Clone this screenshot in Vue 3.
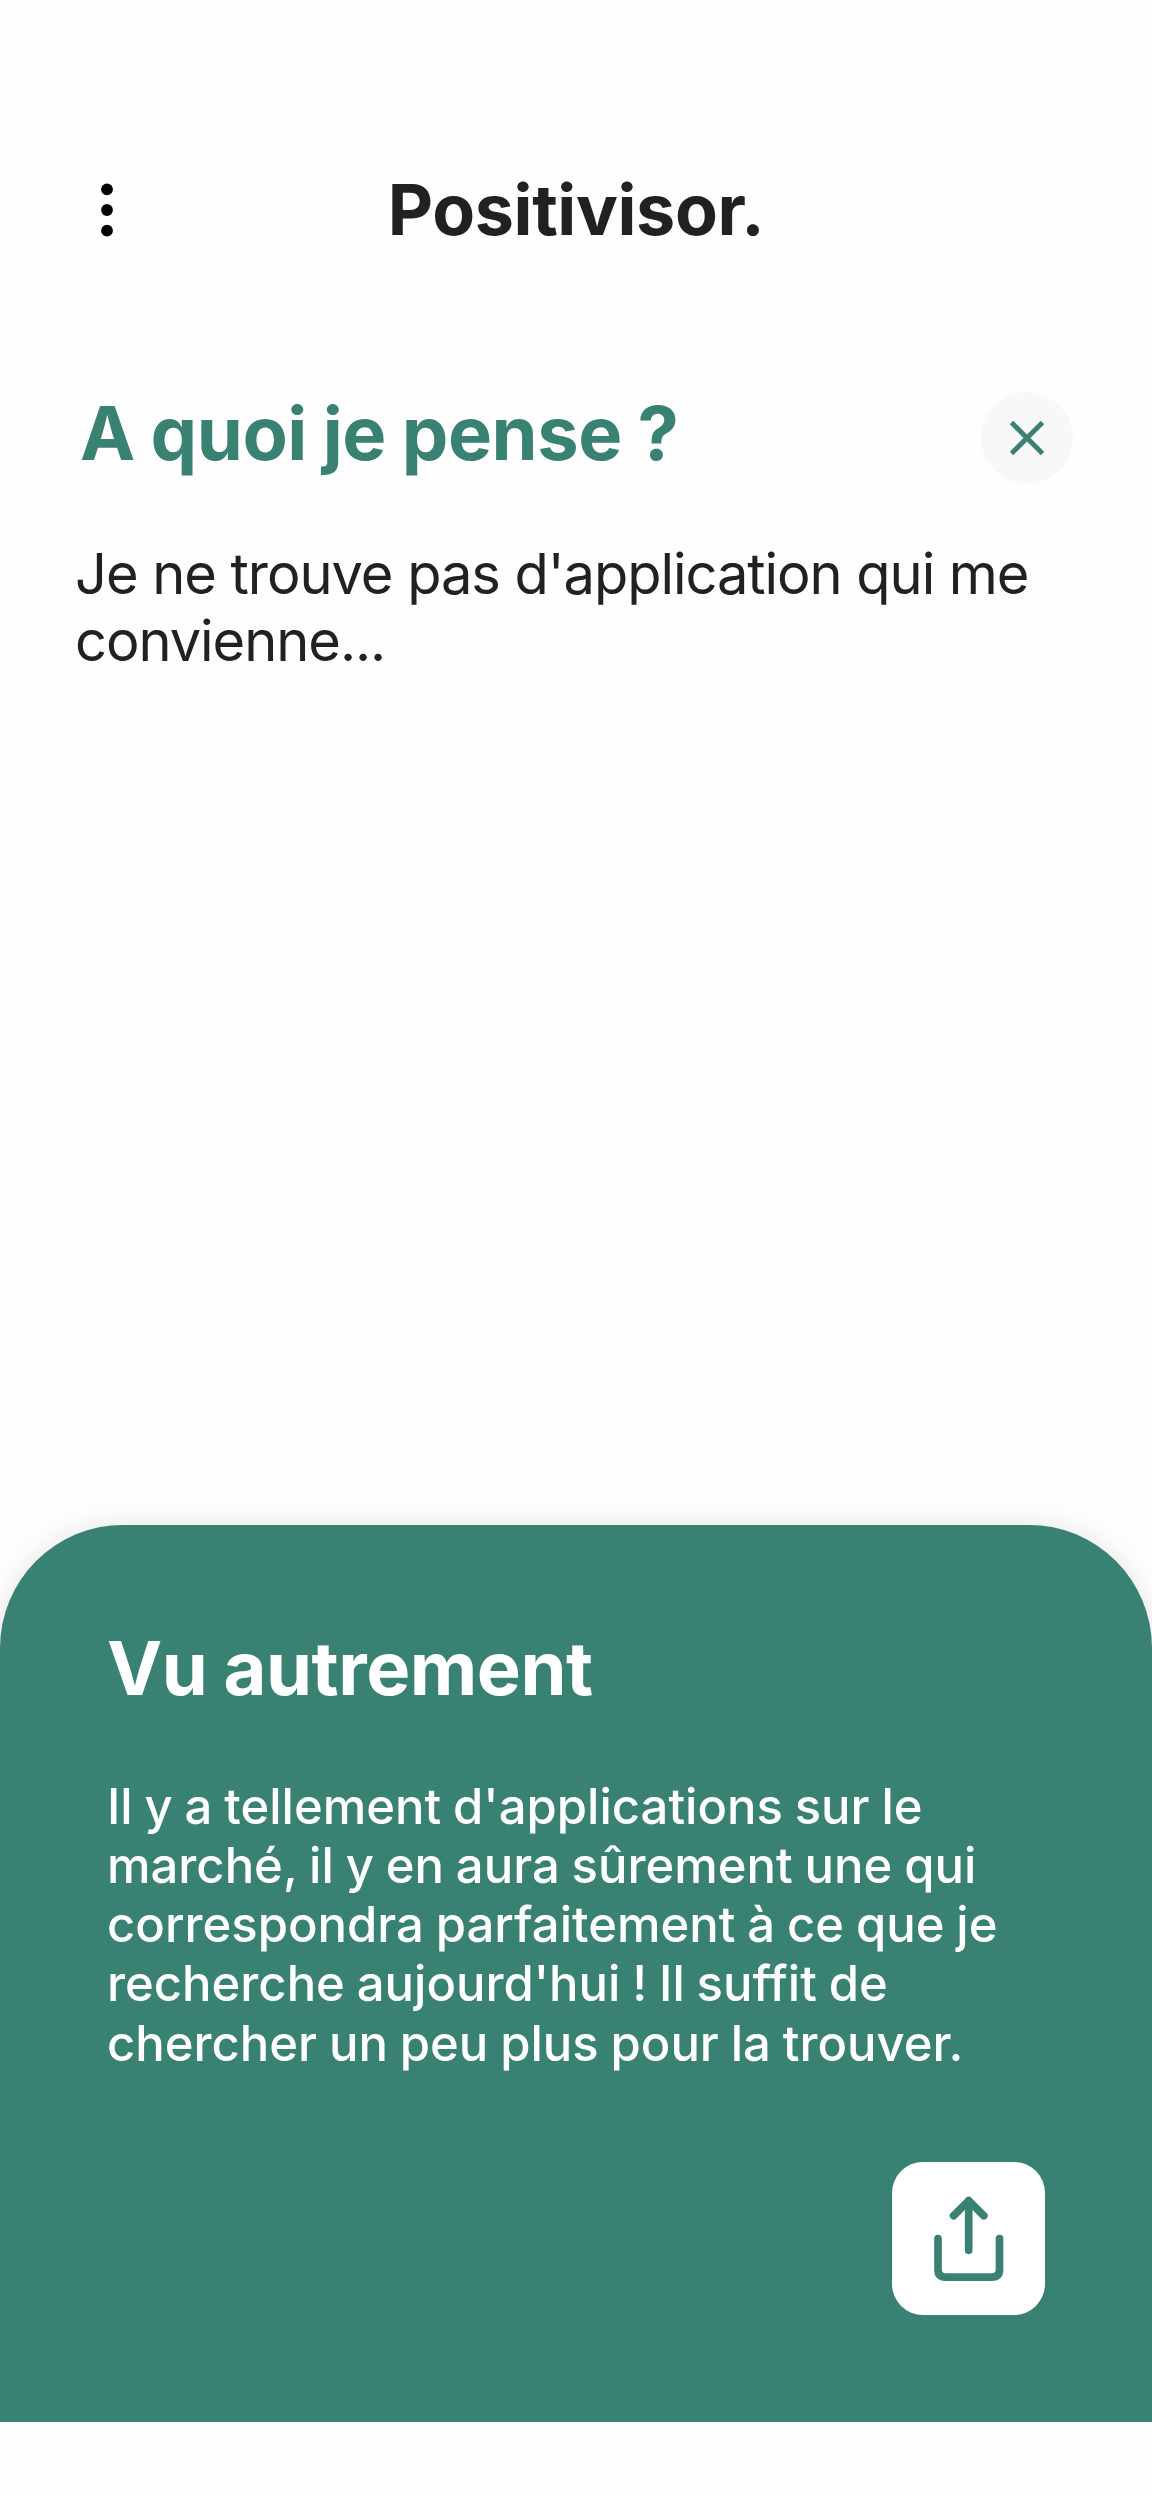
<template>
  <div class="screen">
    <header class="top-bar">
      <button class="menu-btn" aria-label="Menu">
        <svg viewBox="0 0 12 54" width="12" height="54">
          <circle cx="6" cy="6.3" r="5.9" />
          <circle cx="6" cy="27" r="5.9" />
          <circle cx="6" cy="47.7" r="5.9" />
        </svg>
      </button>
      <h1 class="brand">Positivisor.</h1>
    </header>

    <main class="thought">
      <div class="thought-head">
        <h2 class="thought-title">A quoi je pense ?</h2>
        <button v-if="thought" class="close-btn" aria-label="Effacer" @click="clearThought">
          <svg viewBox="0 0 92 92" width="92" height="92">
            <path d="M30.5 30.5 61.5 61.5M61.5 30.5 30.5 61.5" />
          </svg>
        </button>
      </div>
      <p class="thought-text">{{ thought }}</p>
    </main>

    <section class="answer">
      <h2 class="answer-title">Vu autrement</h2>
      <p class="answer-text">
        <template v-for="(line, i) in answer" :key="i">{{ line }}<br></template>
      </p>
      <button class="share-btn" aria-label="Partager" @click="share">
        <svg viewBox="0 0 153 153" width="153" height="153">
          <path d="M76.7 88.3V38.6M61.6 53.7 76.7 38.6 91.8 53.7" />
          <path d="M46 76.7V107.5Q46 115.1 53.6 115.1H99.9Q107.5 115.1 107.5 107.5V76.7" />
        </svg>
      </button>
    </section>
  </div>
</template>

<script setup>
import { ref } from 'vue';

const thought = ref("Je ne trouve pas d'application qui me convienne...");

const answer = [
  "Il y a tellement d'applications sur le",
  'marché, il y en aura sûrement une qui',
  'correspondra parfaitement à ce que je',
  "recherche aujourd'hui ! Il suffit de",
  'chercher un peu plus pour la trouver.',
];

const clearThought = () => {
  thought.value = '';
};

const share = () => {
  if (navigator.share) {
    navigator.share({ text: answer.join(' ') });
  }
};
</script>

<style>
body {
  margin: 0;
  background: #fff;
}
</style>

<style scoped>
.screen {
  display: flex;
  flex-direction: column;
  box-sizing: border-box;
  width: 1152px;
  height: 2496px;
  padding-bottom: 73.7px;
  overflow: hidden;
  background: #fefefe;
  color: #212121;
  font-family: Inter, sans-serif;
}

h1,
h2,
p {
  margin: 0;
}

button {
  padding: 0;
  border: none;
  background: none;
  cursor: pointer;
}

svg {
  display: block;
}

.top-bar {
  display: grid;
  grid-template-columns: 150px 1fr 150px;
  align-items: center;
  height: 85px;
  padding-top: 167px;
}

.menu-btn {
  justify-self: start;
  margin-left: 101px;
}

.brand {
  font-size: 70px;
  font-weight: 700;
  line-height: 85px;
  letter-spacing: -0.4px;
  text-align: center;
}

.thought {
  flex: 1;
  padding: 140px 79px 0 75px;
}

.thought-head {
  display: flex;
  justify-content: space-between;
  height: 92px;
  padding-left: 5px;
}

.thought-title {
  color: #398273;
  font-size: 74px;
  font-weight: 700;
  line-height: 82px;
  letter-spacing: -0.45px;
  word-spacing: -1.3px;
}

.close-btn {
  width: 92px;
  height: 92px;
  border-radius: 50%;
  background: #f8f8f8;
}

.close-btn path {
  fill: none;
  stroke: #398273;
  stroke-width: 4.8;
}

.thought-text {
  margin-top: 57px;
  font-size: 56px;
  font-weight: 400;
  line-height: 67.3px;
  letter-spacing: -1.05px;
}

.answer {
  display: flex;
  flex-direction: column;
  box-sizing: border-box;
  height: 897.6px;
  padding: 98px 107px 107px;
  border-radius: 123px 123px 0 0;
  background: #398273;
  box-shadow: 0 0 30px rgba(0, 0, 0, 0.1);
  clip-path: inset(-60px 0 0);
  color: #fff;
}

.answer-title {
  font-size: 74px;
  font-weight: 700;
  line-height: 90px;
  letter-spacing: -0.45px;
  word-spacing: -1px;
}

.answer-text {
  margin-top: 64px;
  font-size: 49px;
  font-weight: 500;
  line-height: 59.2px;
  word-spacing: -1.2px;
  white-space: nowrap;
}

.share-btn {
  align-self: flex-end;
  width: 153px;
  height: 153px;
  margin-top: auto;
  border-radius: 31px;
  background: #fff;
}

.share-btn path {
  fill: none;
  stroke: #398273;
  stroke-width: 7.7;
  stroke-linecap: round;
  stroke-linejoin: round;
}
</style>
